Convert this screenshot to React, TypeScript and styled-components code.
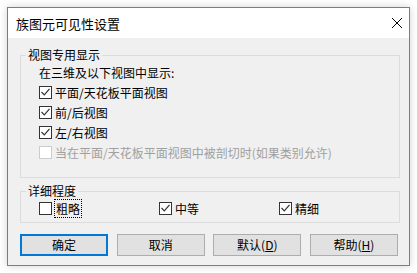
import React from 'react'
import styled, {createGlobalStyle} from 'styled-components'

const GlobalStyle = createGlobalStyle`
  html, body {
    margin: 0;
    padding: 0;
    background: #ffffff;
  }
  body {
    font-family: 'Noto Sans CJK SC', 'Noto Sans', sans-serif;
    font-size: 12px;
    color: #000;
  }
`

const Page = styled.div`
  width: 417px;
  height: 273px;
  padding: 7px 0 0 7px;
  box-sizing: border-box;
`

const Window = styled.div`
  width: 403px;
  height: 259px;
  box-sizing: border-box;
  border: 1px solid #8b68c4;
  background: #f0f0f0;
  box-shadow: 0 0 8px rgba(0, 0, 0, 0.18);
  display: flex;
  flex-direction: column;
`

const TitleBar = styled.div`
  height: 30px;
  background: #ffffff;
  display: flex;
  align-items: center;
  justify-content: space-between;
  padding: 0 6px 0 8px;
  font-size: 13px;
`

const CloseIcon = styled.svg`
  width: 12px;
  height: 12px;
`

const Body = styled.div`
  padding: 10px 0 0 12px;
`

const Group = styled.fieldset<{$top?: number}>`
  margin: ${(p) => p.$top || 0}px 0 0 0;
  padding: 0;
  width: 380px;
  box-sizing: border-box;
  border: 1px solid #dcdcdc;
  min-width: 0;
`

const Legend = styled.legend`
  margin-left: 5px;
  padding: 0 2px;
  line-height: 14px;
  font-size: 12px;
`

const GroupBody = styled.div<{$bottom: number}>`
  padding: 0 0 ${(p) => p.$bottom}px 18px;
`

const Row = styled.div`
  height: 20px;
  display: flex;
  align-items: center;
`

const Grid = styled.div`
  height: 20px;
  display: grid;
  grid-template-columns: 120px 120px 120px;
  align-items: center;
`

const Check = styled.label<{$disabled?: boolean}>`
  display: flex;
  align-items: center;
  gap: 3px;
  color: ${(p) => (p.$disabled ? '#a0a0a0' : '#000')};
`

const Box = styled.span<{$disabled?: boolean}>`
  width: 13px;
  height: 13px;
  box-sizing: border-box;
  border: 1px solid ${(p) => (p.$disabled ? '#cccccc' : '#333333')};
  background: #ffffff;
  display: inline-flex;
  align-items: center;
  justify-content: center;
`

const Focus = styled.span`
  outline: 1px dotted #000;
  outline-offset: 0;
  padding: 0 1px;
`

const Buttons = styled.div`
  margin: 11px 0 0 0;
  width: 378px;
  display: flex;
  justify-content: space-between;
`

const Button = styled.button<{$primary?: boolean}>`
  width: 88px;
  height: 22px;
  box-sizing: border-box;
  background: #e1e1e1;
  border: ${(p) => (p.$primary ? '2px solid #0078d7' : '1px solid #adadad')};
  font-family: 'Noto Sans CJK SC', 'Noto Sans', sans-serif;
  font-size: 12px;
  color: #000;
  padding: 0;
  line-height: 1;
`

const Key = styled.span`
  text-decoration: underline;
`

const Tick = () => (
  <svg width='9' height='8' viewBox='0 0 9 8'>
    <path d='M0.5 4 L3.3 6.8 L8.5 0.8' fill='none' stroke='#333' strokeWidth='1.2' />
  </svg>
)

const CheckItem = ({label, checked, disabled}: {label: React.ReactNode; checked?: boolean; disabled?: boolean}) => (
  <Check $disabled={disabled}>
    <Box $disabled={disabled}>{checked && <Tick />}</Box>
    {label}
  </Check>
)

export default function App() {
  return (
    <Page>
      <GlobalStyle />
      <Window>
        <TitleBar>
          <span>族图元可见性设置</span>
          <CloseIcon viewBox='0 0 12 12'>
            <path d='M1 1 L11 11 M11 1 L1 11' stroke='#000' strokeWidth='1' />
          </CloseIcon>
        </TitleBar>
        <Body>
          <Group>
            <Legend>视图专用显示</Legend>
            <GroupBody $bottom={15}>
              <Row>在三维及以下视图中显示:</Row>
              <Row>
                <CheckItem checked label='平面/天花板平面视图' />
              </Row>
              <Row>
                <CheckItem checked label='前/后视图' />
              </Row>
              <Row>
                <CheckItem checked label='左/右视图' />
              </Row>
              <Row>
                <CheckItem disabled label='当在平面/天花板平面视图中被剖切时(如果类别允许)' />
              </Row>
            </GroupBody>
          </Group>
          <Group $top={6}>
            <Legend>详细程度</Legend>
            <GroupBody $bottom={4}>
              <Grid>
                <CheckItem label={<Focus>粗略</Focus>} />
                <CheckItem checked label='中等' />
                <CheckItem checked label='精细' />
              </Grid>
            </GroupBody>
          </Group>
          <Buttons>
            <Button $primary>确定</Button>
            <Button>取消</Button>
            <Button>
              默认(<Key>D</Key>)
            </Button>
            <Button>
              帮助(<Key>H</Key>)
            </Button>
          </Buttons>
        </Body>
      </Window>
    </Page>
  )
}
